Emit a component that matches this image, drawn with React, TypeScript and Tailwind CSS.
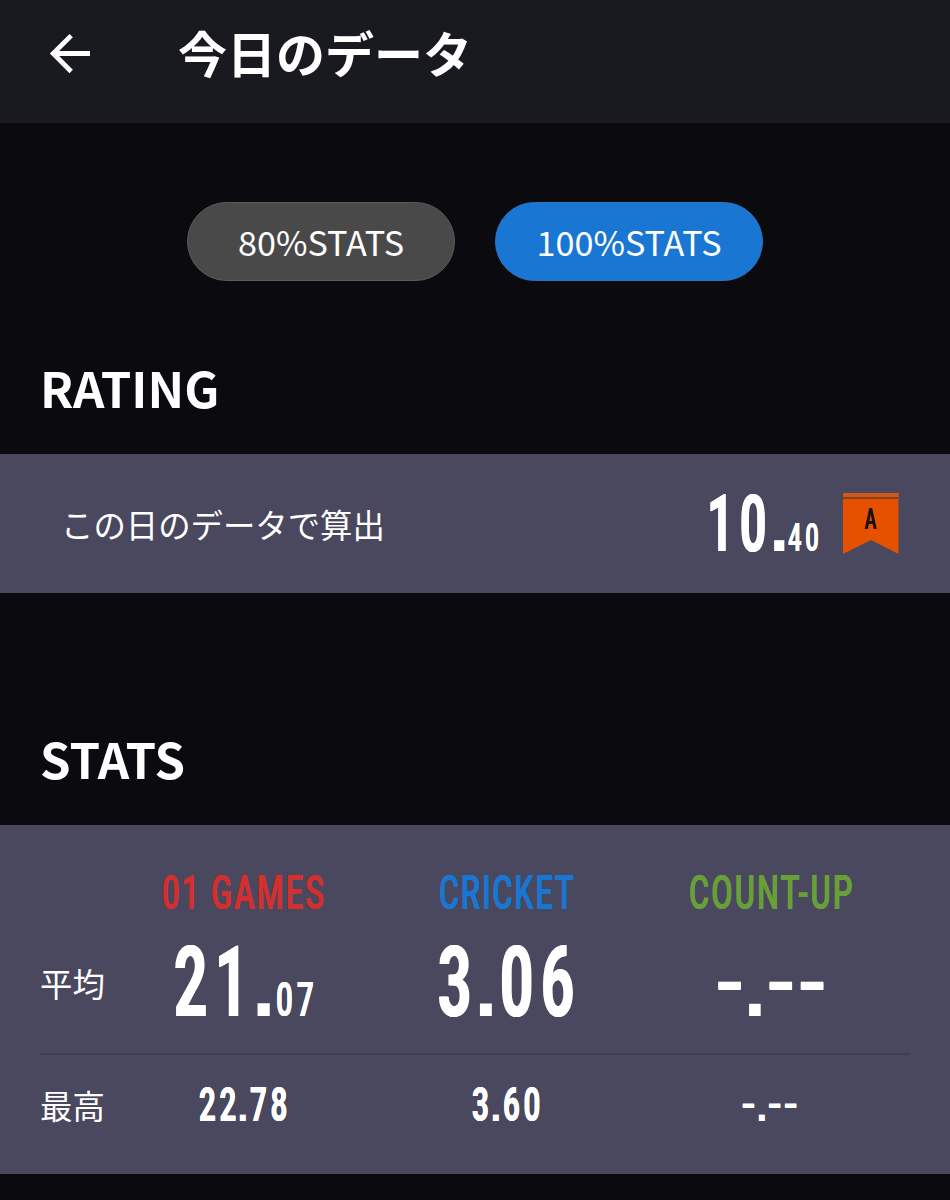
import type { ReactNode } from "react";

type PieceProps = { box: string; type: string; children: ReactNode };

// Narrow lettering: the box reserves the width that the squeezed text takes up.
function Narrow({ box, type, children }: PieceProps) {
  return (
    <span className={`block shrink-0 whitespace-nowrap ${box}`}>
      <span className={`inline-block origin-left font-['Roboto',sans-serif] ${type}`}>{children}</span>
    </span>
  );
}

// Square points and dashes.
function Mark({ box, type, children }: PieceProps) {
  return (
    <span className={`block shrink-0 whitespace-nowrap ${box}`}>
      <span className={`inline-block font-['Liberation_Sans',sans-serif] leading-none ${type}`}>{children}</span>
    </span>
  );
}

const XL = "scale-x-[0.59] text-[98.5px] leading-[100px] font-bold tracking-[12.9px] [text-shadow:1.1px_0_0,-1.1px_0_0]";
const LG = "scale-x-[0.59] text-[79px] leading-[80px] font-bold tracking-[10.2px] [text-shadow:0.9px_0_0,-0.9px_0_0]";
const MD = "scale-x-[0.6] text-[49px] leading-[60px] font-bold tracking-[6px] [text-shadow:0.4px_0_0,-0.4px_0_0]";
const MD_LIGHT = "scale-x-[0.6] text-[49px] leading-[60px] font-semibold tracking-[6.8px] [text-shadow:0.5px_0_0,-0.5px_0_0]";
const SM = "scale-x-[0.6] text-[39.5px] leading-[40px] font-semibold tracking-[6.2px] [text-shadow:0.5px_0_0,-0.5px_0_0]";
const LABEL = "scale-x-[0.63] text-[49px] leading-[60px] font-medium [text-shadow:0.5px_0_0,-0.5px_0_0]";

function BackArrow() {
  return (
    <svg className="h-[42px] w-[42px]" viewBox="0 0 42 42" fill="none" stroke="#fff" strokeWidth="4.8">
      <path d="M41 20.5H4M22.2 2.6L4.2 20.5l18 18" />
    </svg>
  );
}

function RankBadge() {
  return (
    <div className="relative h-[61px] w-[56px]">
      <svg className="block h-full w-full" viewBox="0 0 56 61">
        <path d="M0 0h55.5v61L28 47 0 61z" fill="#e65100" />
        <path d="M0 0h55.5v4H0z" fill="#cf581c" />
        <path d="M0 4h55.5v2H0z" fill="#8b3f1c" />
      </svg>
      <span className="absolute inset-x-0 top-[11px] text-center font-['Roboto',sans-serif] text-[29px] leading-[31px] font-medium text-[#1a1010]">
        <span className="inline-block scale-x-[0.6] [text-shadow:0.4px_0_0,-0.4px_0_0]">A</span>
      </span>
    </div>
  );
}

export default function App() {
  return (
    <div className="h-[1200px] w-[950px] overflow-hidden bg-[#0b0b0f] font-['Noto_Sans_CJK_JP',sans-serif] text-white">
      <header className="flex h-[123px] items-start bg-[#191920] pl-[49px]">
        <div className="mt-[33px]"><BackArrow /></div>
        <h1 className="mt-[15px] ml-[87px] text-[49px] leading-[74px] font-bold">今日のデータ</h1>
      </header>

      <div className="flex gap-[40px] pt-[79px] pl-[187px]">
        <button className="h-[79px] w-[268px] rounded-full border border-[#5c5c5d] bg-[#49494a] text-[34.2px] leading-[77px]">80%STATS</button>
        <button className="h-[79px] w-[268px] rounded-full border border-[#2d75c0] bg-[#1976d2] text-[34.2px] leading-[77px]">100%STATS</button>
      </div>

      <h2 className="mt-[71px] h-[102px] pl-[40px] text-[49px] leading-[70px] font-bold">RATING</h2>
      <section className="flex h-[139px] items-center bg-[#49485e] pl-[61px]">
        <p className="w-[645.5px] text-[32.4px] leading-[139px]">この日のデータで算出</p>
        <div className="flex items-baseline">
          <Narrow box="w-[62.8px]" type={LG}>10</Narrow>
          <Mark box="w-[18.7px]" type="text-[72px] font-bold">.</Mark>
          <Narrow box="w-[55px]" type={SM}>40</Narrow>
        </div>
        <RankBadge />
      </section>

      <h2 className="mt-[130px] h-[102px] pl-[40px] text-[49px] leading-[69px] font-bold">STATS</h2>
      <section className="h-[349px] bg-[#49485e] px-[40px]">
        <div className="grid h-[230px] grid-cols-[71px_264px_264px_264px] grid-rows-[92px_136px] border-b-[2px] border-[#3f3e52]">
          <span />
          <div className="pt-[38px] pl-[50.5px] text-[#d32f2f]">
            <Narrow box="w-[164px]" type={`${LABEL} tracking-[3.3px]`}>01 GAMES</Narrow>
          </div>
          <div className="pt-[38px] pl-[63.5px] text-[#1976d2]">
            <Narrow box="w-[136px]" type={`${LABEL} tracking-[2.7px]`}>CRICKET</Narrow>
          </div>
          <div className="pt-[38px] pl-[49.5px] text-[#689f38]">
            <Narrow box="w-[164px]" type={`${LABEL} tracking-[3.4px]`}>COUNT-UP</Narrow>
          </div>
          <span className="pt-[34px] text-[32.4px] leading-[64px]">平均</span>
          <div className="flex items-baseline pt-[16px] pl-[63.3px]">
            <Narrow box="w-[77.4px]" type={XL}>21</Narrow>
            <Mark box="w-[24.3px]" type="text-[86px] font-bold">.</Mark>
            <Narrow box="w-[42px]" type={MD_LIGHT}>07</Narrow>
          </div>
          <div className="flex items-baseline pt-[16px] pl-[62.6px]">
            <Narrow box="w-[36.6px]" type={XL}>3</Narrow>
            <Mark box="w-[25.5px]" type="text-[84px] font-bold">.</Mark>
            <Narrow box="w-[80px]" type={XL}>06</Narrow>
          </div>
          <div className="flex items-baseline pt-[21px] pl-[75.2px]">
            <Mark box="w-[29.2px]" type="-translate-y-[6.5px] text-[92px] tracking-[0.6px] [text-shadow:0_1px_0]">-</Mark>
            <Mark box="w-[22.2px]" type="text-[82px] font-bold">.</Mark>
            <Mark box="w-[70px]" type="-translate-y-[6.5px] text-[92px] tracking-[0.6px] [text-shadow:0_1px_0]">--</Mark>
          </div>
        </div>
        <div className="grid grid-cols-[71px_264px_264px_264px]">
          <span className="pt-[18px] text-[32.4px] leading-[64px]">最高</span>
          <div className="flex items-baseline pt-[20px] pl-[87.5px]">
            <Narrow box="w-[38.5px]" type={MD}>22</Narrow>
            <Mark box="w-[12.5px]" type="text-[42px] font-bold">.</Mark>
            <Narrow box="w-[42px]" type={MD}>78</Narrow>
          </div>
          <div className="flex items-baseline pt-[20px] pl-[97.4px]">
            <Narrow box="w-[17.6px]" type={MD}>3</Narrow>
            <Mark box="w-[13.3px]" type="text-[42px] font-bold">.</Mark>
            <Narrow box="w-[42px]" type={MD}>60</Narrow>
          </div>
          <div className="flex items-baseline pt-[27px] pl-[101.8px]">
            <Mark box="w-[15.2px]" type="-translate-y-[3px] text-[46px] [text-shadow:0_0.7px_0]">-</Mark>
            <Mark box="w-[11.1px]" type="text-[42px] font-bold">.</Mark>
            <Mark box="w-[34px]" type="-translate-y-[3px] text-[46px] tracking-[0.5px] [text-shadow:0_0.7px_0]">--</Mark>
          </div>
        </div>
      </section>
    </div>
  );
}
